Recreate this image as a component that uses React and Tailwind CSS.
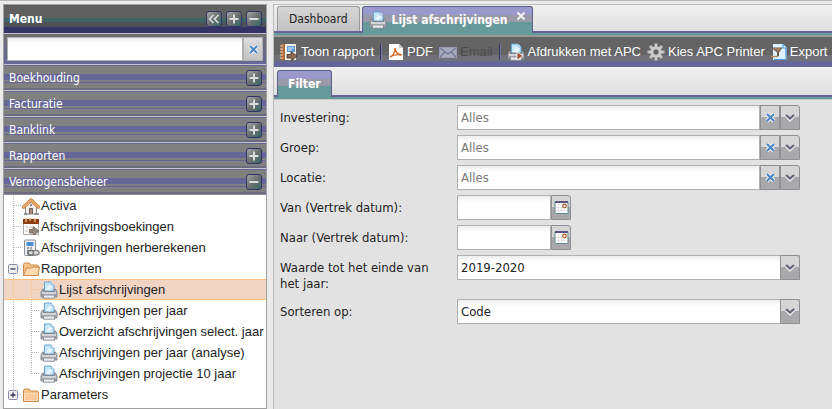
import { useState } from 'react'

const UI_FONT = "font-['DejaVu_Sans_Condensed','DejaVu_Sans',sans-serif]"

const SECTIONS = ['Boekhouding', 'Facturatie', 'Banklink', 'Rapporten', 'Vermogensbeheer']

const TREE = [
  { label: 'Activa', icon: 'house', level: 0 },
  { label: 'Afschrijvingsboekingen', icon: 'calendar', level: 0 },
  { label: 'Afschrijvingen herberekenen', icon: 'calculator', level: 0 },
  { label: 'Rapporten', icon: 'folderOpen', level: 0, box: 'minus' },
  { label: 'Lijst afschrijvingen', icon: 'printer', level: 1 },
  { label: 'Afschrijvingen per jaar', icon: 'printer', level: 1 },
  { label: 'Overzicht afschrijvingen select. jaar', icon: 'printer', level: 1 },
  { label: 'Afschrijvingen per jaar (analyse)', icon: 'printer', level: 1 },
  { label: 'Afschrijvingen projectie 10 jaar', icon: 'printer', level: 1, last: true },
  { label: 'Parameters', icon: 'folder', level: 0, box: 'plus', last: true },
]

/* ---------- icons ---------- */

function Printer({ arrow }) {
  return (
    <svg width="18" height="18" viewBox="0 0 18 18" className="shrink-0" aria-hidden="true">
      <path d="M4.500 10V1h6.500l3 3v6z" fill="#c4e4fb" stroke="#6aa6d0" />
      <path d="M5.500 8.500L11 2l2.500 2.500-4 5z" fill="#e6f5ff" />
      <path d="M11 1v3h3" fill="#fff" stroke="#6aa6d0" strokeWidth=".8" />
      <path d="M2.500 8L1 11v5h16v-5l-1.500-3h-1v2.500h-11V8z" fill="#b9bcc2" stroke="#7c7f86" strokeWidth=".9" />
      <path d="M2 12h14" stroke="#e2e4e8" strokeWidth="1.200" />
      <path d="M3.500 14h11v3.200h-11z" fill="#ececee" stroke="#85888f" strokeWidth=".9" />
      <path d="M1.500 14h2M14.500 14h2" stroke="#8f9299" strokeWidth="1.500" />
      {arrow && <path d="M10 9l6 4-6 4z" fill="#a44a38" stroke="#fff" strokeWidth=".8" />}
    </svg>
  )
}

function House() {
  return (
    <svg width="18" height="18" viewBox="0 0 18 18" className="shrink-0" aria-hidden="true">
      <path d="M3.500 9v8h11V9L9 3.500z" fill="#efeeec" stroke="#8a8784" />
      <path d="M7.500 17v-5.500h3V17" fill="#a58f7c" stroke="#6f6259" />
      <circle cx="9" cy="8" r="1.200" fill="#888" />
      <path d="M1.500 10L9 3l7.500 7" fill="none" stroke="#a8743f" strokeWidth="3.400" strokeLinecap="round" strokeLinejoin="round" />
      <path d="M1.500 10L9 3l7.500 7" fill="none" stroke="#e8a662" strokeWidth="2.400" strokeLinecap="round" strokeLinejoin="round" />
      <path d="M2 17h3M13 17h4" stroke="#777" strokeWidth="1.500" />
    </svg>
  )
}

function Calendar() {
  return (
    <svg width="18" height="18" viewBox="0 0 18 18" className="shrink-0" aria-hidden="true">
      <path d="M1.500 2.500h15v14h-15z" fill="#fff" stroke="#aaa" />
      <path d="M1 1h16v5H1z" fill="#8b3d10" />
      <path d="M4 0v4M8 0v3M13 0v4" stroke="#e8b27c" strokeWidth="1.500" />
      <path d="M3 8h3v2H3zM7 8h3v2H7zM3 12h3v2H3z" fill="#ddd" />
      <path d="M7.500 11.500H11V8.500l6 4.500-5 4-1-2H7.500z" fill="#99887c" stroke="#6b5c52" strokeWidth=".8" />
    </svg>
  )
}

function Calculator() {
  return (
    <svg width="18" height="18" viewBox="0 0 18 18" className="shrink-0" aria-hidden="true">
      <rect x="2.500" y="1" width="11" height="15.500" rx="1" fill="#eceef1" stroke="#8b9099" />
      <path d="M4.500 3h7v4h-7z" fill="#4b8fd2" />
      <path d="M5 9h2M8 9h2M5 11.500h2M5 14h2" stroke="#888" strokeWidth="1.400" />
      <rect x="6" y="11.500" width="6" height="4.500" rx="2.200" fill="#ddd" stroke="#686868" strokeWidth="1.600" />
      <rect x="11" y="11.500" width="6" height="4.500" rx="2.200" fill="#ddd" stroke="#8b8b8b" strokeWidth="1.600" />
    </svg>
  )
}

function Folder({ open }) {
  return (
    <svg width="18" height="18" viewBox="0 0 18 18" className="shrink-0" aria-hidden="true">
      <path d="M1.500 15.500v-11l1-1.500h4.500l1.500 2h7l1 1v9.500z" fill="#f7c48a" stroke="#c98a4b" />
      {open ? (
        <path d="M1.500 15.500L4.500 8h5l1-1h7l-1.500 8.500z" fill="#ffdcb0" stroke="#c98a4b" />
      ) : (
        <path d="M2.500 7.500h13v7h-13z" fill="#ffcc99" stroke="#ffe0c0" />
      )}
    </svg>
  )
}

function ReportIcon() {
  return (
    <svg width="18" height="18" viewBox="0 0 18 18" className="shrink-0" aria-hidden="true">
      <path d="M2 1h14v16H2z" fill="#f4efe6" />
      <path d="M1 1h4v16H1z" fill="#b06b3d" />
      <path d="M0 3h3M0 6h3M0 9h3M0 12h3M0 15h3" stroke="#f3d2b0" />
      <path d="M7 3h8v6H7z" fill="#5b9bd6" />
      <path d="M8 5h6M8 7h4" stroke="#e4f2fd" />
      <path d="M7 11.500h4V8.500l6 4.500-5 4.500-1-2.500H7z" fill="#8d6a52" stroke="#43342b" strokeWidth=".8" />
    </svg>
  )
}

function PdfIcon() {
  return (
    <svg width="16" height="18" viewBox="0 0 16 18" className="shrink-0" aria-hidden="true">
      <path d="M1 1h10l4 4v12H1z" fill="#fff" />
      <path d="M11 1v4h4z" fill="#c9c9c9" />
      <path d="M2 14c3-1 5-5 5-9 0 4 2 6 7 7-5-1-9 0-12 2z" fill="none" stroke="#d9661f" strokeWidth="1.400" />
    </svg>
  )
}

function MailIcon() {
  return (
    <svg width="18" height="18" viewBox="0 0 18 18" className="shrink-0" aria-hidden="true">
      <path d="M.5 4.500h17v10H.5z" fill="#a9a9bd" stroke="#9c9cb4" />
      <path d="M1 5l8 6 8-6M1 14l5-5M17 14l-5-5" fill="none" stroke="#74749a" strokeWidth="1.200" />
    </svg>
  )
}

function GearIcon() {
  return (
    <svg width="18" height="18" viewBox="-9 -9 18 18" className="shrink-0" aria-hidden="true">
      <g stroke="#c4c4c4" strokeWidth="3">
        <path d="M0-8.500V8.500M-8.500 0H8.500M-6-6L6 6M-6 6L6-6" />
      </g>
      <circle r="5.800" fill="#cdcdcd" />
      <circle r="2.700" fill="#646464" stroke="#999" />
    </svg>
  )
}

function ExportIcon() {
  return (
    <svg width="16" height="18" viewBox="0 0 16 18" className="shrink-0" aria-hidden="true">
      <path d="M2 1h10l3.500 3.500V17H2z" fill="#dff1ff" />
      <path d="M12 1v4h3.500M15 5v11.500H3" fill="none" stroke="#4a9be0" strokeWidth="1.200" />
      <path d="M0 4.500h11.500L8 9.500v3.500l-2 1V9.500z" fill="#6b5a4a" />
      <path d="M0 13.500h7M2 6h6L6 8.500" fill="none" stroke="#a98a66" strokeWidth="1.600" />
    </svg>
  )
}

function Cross() {
  return (
    <svg width="11" height="11" viewBox="0 0 11 11" aria-hidden="true">
      <path d="M2 2l7 7M9 2L2 9" stroke="#f2f2f2" strokeWidth="4" />
      <path d="M2 2l7 7M9 2L2 9" stroke="#4a86c4" strokeWidth="2" />
    </svg>
  )
}

function Chevron() {
  return (
    <svg width="12" height="9" viewBox="0 0 12 9" aria-hidden="true">
      <path d="M2 3.500l4 4 4-4" fill="none" stroke="#eee" strokeWidth="2" />
      <path d="M2 2l4 3.500L10 2" fill="none" stroke="#66667a" strokeWidth="2.200" />
    </svg>
  )
}

function DateIcon() {
  return (
    <svg width="15" height="15" viewBox="0 0 15 15" aria-hidden="true">
      <rect x="1" y="1.500" width="13" height="12" rx="1" fill="#fff" stroke="#5d8a90" />
      <path d="M1 2h13" stroke="#55557f" strokeWidth="2" />
      <path d="M4.500 4v9M7.500 4v9M2 7.500h11M2 10.500h11" stroke="#e4e4e4" />
      <circle cx="10.500" cy="6" r="1.800" fill="#fff" stroke="#b5561f" strokeWidth="1.200" />
    </svg>
  )
}

const ICONS = {
  house: <House />,
  calendar: <Calendar />,
  calculator: <Calculator />,
  folder: <Folder />,
  folderOpen: <Folder open />,
  printer: <Printer />,
}

/* ---------- sidebar ---------- */

function ToolGlyph({ kind }) {
  return (
    <span className="flex h-4 w-4 shrink-0 items-center justify-center rounded-[3px] border border-[#333366] bg-linear-to-br from-[#a8a8a8] via-[#6c7070] to-[#336666]">
      <svg width="12" height="12" viewBox="0 0 12 12" fill="none" stroke="#dcdcdc" strokeWidth="2" aria-hidden="true">
        {kind === 'plus' && <path d="M6 1.500v9M1.500 6h9" />}
        {kind === 'minus' && <path d="M1.500 6h9" />}
        {kind === 'collapse' && <path d="M5.500 2l-4 4 4 4M10.500 2l-4 4 4 4" strokeWidth="1.600" />}
      </svg>
    </span>
  )
}

function Elbow({ box, last, through, selected }) {
  const color = selected ? '#ffbf80' : '#bdbdbd'
  return (
    <svg width="18" height="21" viewBox="0 0 18 21" className="shrink-0" aria-hidden="true">
      <path d={last ? 'M9.500 0v11' : 'M9.500 0v21'} stroke={color} strokeDasharray="1 1" />
      {!through && <path d="M10 10.500h7" stroke={color} strokeDasharray="1 1" />}
      {box && (
        <>
          <rect x="4.500" y="6.500" width="9" height="9" rx="1" fill="#eee" stroke="#8c8ca4" />
          <path d={box === 'plus' ? 'M6.500 11h5M9 8.500v5' : 'M6.500 11h5'} stroke="#333355" strokeWidth="1.300" />
        </>
      )}
    </svg>
  )
}

function TreeRow({ item, onSelect, selected }) {
  return (
    <li
      className={
        selected
          ? 'flex h-[21px] items-center bg-[linear-gradient(#ffc080_0_1px,#f0d5c4_1px_20px,#ffc080_20px)] text-[#222222]'
          : 'flex h-[21px] items-center text-[#222222]'
      }
    >
      {item.level === 1 && <Elbow through selected={selected} />}
      <Elbow box={item.box} last={item.last} selected={selected} />
      <button type="button" onClick={onSelect} className="flex items-center gap-px whitespace-nowrap">
        {ICONS[item.icon]}
        <span className="leading-5">{item.label}</span>
      </button>
    </li>
  )
}

function Sidebar() {
  const [active, setActive] = useState('Lijst afschrijvingen')

  return (
    <aside className="flex w-[264px] shrink-0 flex-col border border-[#a0a0a0] bg-white">
      <header className="flex h-7 items-center gap-1 bg-[linear-gradient(#606060_0_13px,#3c6464_13px_17px,#505058_17px_22px,#333366_22px)] pr-1 pl-[5px]">
        <h1 className={`${UI_FONT} flex-1 text-[12px] font-bold text-white`}>Menu</h1>
        <button type="button" aria-label="Menu inklappen"><ToolGlyph kind="collapse" /></button>
        <button type="button" aria-label="Alles openen"><ToolGlyph kind="plus" /></button>
        <button type="button" aria-label="Alles sluiten"><ToolGlyph kind="minus" /></button>
      </header>

      <form className="flex h-[31px] border-t border-[#c4c4c4] bg-linear-to-b from-[#6e6e6e] to-[#666699] px-[3px] py-[3px]">
        <input
          type="text"
          aria-label="Zoeken in menu"
          className={`${UI_FONT} h-6 min-w-0 flex-1 border border-[#b0b0b0] bg-linear-to-b from-[#ececec] to-white to-25% px-1 text-[13px] outline-none`}
        />
        <button type="button" aria-label="Wissen" className="flex h-6 w-5 items-center justify-center border border-[#b0b0b0] bg-linear-to-b from-[#dddddd] to-[#c2c2c2]">
          <Cross />
        </button>
      </form>

      {SECTIONS.map((name) => (
        <button
          key={name}
          type="button"
          className={`${UI_FONT} flex h-[26px] items-center justify-between border-t border-[#c4c4c4] bg-[linear-gradient(#666699_0_1px,#808080_1px_9px,#666699_9px_15px,#808080_15px_17px,#666699_17px_18px,#808080_18px_23px,#6c6c80_23px)] pr-1 pl-[5px] text-[12px] text-white`}
        >
          <span>{name}</span>
          <ToolGlyph kind={name === 'Vermogensbeheer' ? 'minus' : 'plus'} />
        </button>
      ))}

      <ul className="border-t border-[#8a8a9a] font-['Liberation_Sans',Arial,sans-serif] text-[13px]">
        {TREE.map((item) => (
          <TreeRow key={item.label} item={item} selected={active === item.label} onSelect={() => setActive(item.label)} />
        ))}
      </ul>
    </aside>
  )
}

/* ---------- main panel ---------- */

const ACTIVE_TAB = 'border border-b-0 border-[#5c6088] bg-[linear-gradient(#9999cc_0_8px,#9999a8_8px_15px,#669999_15px)] font-bold text-white'

function Separator() {
  return <span className="h-4 w-[2px] shrink-0 border-l border-[#333366] bg-[#777799]" />
}

function ToolbarButton({ icon, children, disabled }) {
  return (
    <button type="button" disabled={disabled} className="flex shrink-0 items-center gap-[3px] text-white disabled:text-[#4c4c4c]">
      {icon}
      <span>{children}</span>
    </button>
  )
}

const TRIGGER = 'flex h-[25px] w-5 shrink-0 items-center justify-center border border-[#8f8f94] bg-[linear-gradient(#d6d6d6_0_48%,#a9a9ab_48%)]'
const FIELD = 'h-[25px] min-w-0 flex-1 border border-[#b0b0b0] bg-linear-to-b from-[#ededed] to-white to-25% px-[3px] text-[13px] outline-none'

function Row({ id, label, children }) {
  return (
    <div className="flex items-start">
      <label htmlFor={id} className="w-[177px] shrink-0 pt-[5px] pr-4 pb-[2px] text-[13px] leading-4">
        {label}
      </label>
      {children}
    </div>
  )
}

function ComboField({ id, label }) {
  const [value, setValue] = useState('')
  return (
    <Row id={id} label={label}>
      <div className="flex max-w-[343px] flex-1">
        <input id={id} type="text" placeholder="Alles" value={value} onChange={(e) => setValue(e.target.value)} className={`${FIELD} placeholder:text-[#777777]`} />
        <button type="button" aria-label={`${label} wissen`} onClick={() => setValue('')} className={TRIGGER}><Cross /></button>
        <button type="button" aria-label={`${label} openen`} className={`${TRIGGER} rounded-tr-[3px]`}><Chevron /></button>
      </div>
    </Row>
  )
}

function DateField({ id, label }) {
  return (
    <Row id={id} label={label}>
      <div className="flex max-w-[114px] flex-1">
        <input id={id} type="text" className={FIELD} />
        <button type="button" aria-label={`${label} kalender`} className={`${TRIGGER} rounded-tr-[3px]`}><DateIcon /></button>
      </div>
    </Row>
  )
}

function SelectField({ id, label, options }) {
  return (
    <Row id={id} label={label}>
      <div className="relative flex max-w-[343px] flex-1">
        <select id={id} className={`${FIELD} appearance-none pr-6`}>
          {options.map((o) => (
            <option key={o}>{o}</option>
          ))}
        </select>
        <span className={`${TRIGGER} pointer-events-none absolute top-0 right-0 rounded-tr-[3px]`}><Chevron /></span>
      </div>
    </Row>
  )
}

function Main() {
  return (
    <main className={`${UI_FONT} flex min-w-0 flex-1 flex-col border-t border-l border-[#bcbcbc] bg-[#e2e2e2] text-[#222222]`}>
      <nav className="flex h-[30px] items-end gap-[2px] border-b-2 border-[#669999] bg-linear-to-b from-[#f0f0f0] to-[#dedede] px-[3px] shadow-[inset_0_-2px_0_#666699]">
        <button type="button" className="mb-[2px] h-[25px] rounded-t-[3px] border border-b-0 border-[#9a9a9a] bg-linear-to-b from-[#d6d6d6] to-[#c2c2c2] px-[11px] text-[12px]">
          Dashboard
        </button>
        <div className={`${ACTIVE_TAB} flex h-[27px] items-start rounded-t-[3px] px-[6px] text-[12px]`}>
          <button type="button" className="flex h-[25px] items-center gap-[5px] whitespace-nowrap">
            <Printer />
            <span>Lijst afschrijvingen</span>
          </button>
          <button type="button" aria-label="Tabblad sluiten" className="mt-1 ml-2">
            <svg width="10" height="10" viewBox="0 0 10 10" aria-hidden="true">
              <path d="M1.500 1.500l7 7M8.500 1.500l-7 7" stroke="#f2f2f2" strokeWidth="2" />
            </svg>
          </button>
        </div>
      </nav>

      <div role="toolbar" className="flex h-8 items-center overflow-hidden border-t-2 border-[#9a9a9a] bg-[linear-gradient(#646464_0_18px,#707078_18px_24px,#666699_24px)] pl-[6px] font-['Liberation_Sans',Arial,sans-serif] text-[13px] whitespace-nowrap">
        <div className="flex items-center gap-[6px]">
          <ToolbarButton icon={<ReportIcon />}>Toon rapport</ToolbarButton>
          <Separator />
          <ToolbarButton icon={<PdfIcon />}>PDF</ToolbarButton>
          <ToolbarButton icon={<MailIcon />} disabled>Email</ToolbarButton>
          <Separator />
          <ToolbarButton icon={<Printer arrow />}>Afdrukken met APC</ToolbarButton>
          <ToolbarButton icon={<GearIcon />}>Kies APC Printer</ToolbarButton>
          <ToolbarButton icon={<ExportIcon />}>Export</ToolbarButton>
        </div>
      </div>

      <nav className="flex h-8 items-end border-b-2 border-[#669999] bg-linear-to-b from-[#f0f0f0] to-[#dedede] px-[3px] shadow-[inset_0_-2px_0_#666699]">
        <button type="button" className={`${ACTIVE_TAB} h-[27px] rounded-t-[3px] px-[10px] text-[12px]`}>
          Filter
        </button>
      </nav>

      <form className="flex flex-col gap-[5px] border-t border-[#c8c8c8] py-[5px] pr-8 pl-[6px]">
        <ComboField id="investering" label="Investering:" />
        <ComboField id="groep" label="Groep:" />
        <ComboField id="locatie" label="Locatie:" />
        <DateField id="van" label="Van (Vertrek datum):" />
        <DateField id="naar" label="Naar (Vertrek datum):" />
        <SelectField id="waarde" label="Waarde tot het einde van het jaar:" options={['2019-2020', '2018-2019']} />
        <SelectField id="sorteren" label="Sorteren op:" options={['Code', 'Naam']} />
      </form>
    </main>
  )
}

export default function App() {
  return (
    <div className="h-screen overflow-hidden border-t border-[#b8b8b8] bg-[#ebebeb]">
      <div className="flex h-full gap-[6px] pt-[3px] pl-[3px]">
        <Sidebar />
        <Main />
      </div>
    </div>
  )
}
